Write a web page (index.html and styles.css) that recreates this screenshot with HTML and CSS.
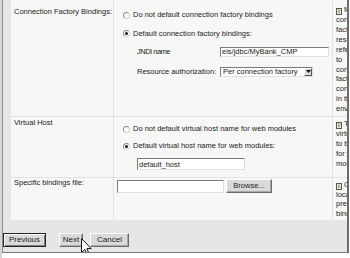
FILE: index.html
```html
<!DOCTYPE html>
<html>
<head>
<meta charset="utf-8">
<link rel="stylesheet" href="styles.css">
</head>
<body>
<div class="page">
  <div class="panel">
    <div class="grid">
      <div class="cell label r1">Connection Factory Bindings:</div>
      <div class="cell ctrl r1">
        <div class="opt"><span class="radio"></span>Do not default connection factory bindings</div>
        <div class="opt"><span class="radio on"></span>Default connection factory bindings:</div>
        <div class="field"><span class="flabel jndi-label">JNDI name</span><input class="text jndi" value="eis/jdbc/MyBank_CMP"></div>
        <div class="field"><span class="flabel">Resource authorization:</span><span class="select"><span class="sel-text">Per connection factory</span><span class="sel-btn"><svg width="5" height="3" viewBox="0 0 5 3"><path d="M0 0H5L2.5 3Z" fill="#111"/></svg></span></span></div>
      </div>
      <div class="cell desc r1"><span class="info">i</span> Map connection factory resource references to connection factory configured in the environment</div>

      <div class="cell label r2">Virtual Host</div>
      <div class="cell ctrl r2">
        <div class="opt"><span class="radio"></span>Do not default virtual host name for web modules</div>
        <div class="opt"><span class="radio on"></span>Default virtual host name for web modules:</div>
        <input class="text vhost" value="default_host">
      </div>
      <div class="cell desc r2"><span class="info">i</span> The virtual host to be used for web modules</div>

      <div class="cell label r3">Specific bindings file:</div>
      <div class="cell ctrl r3">
        <input class="text file" value="">
        <button class="btn browse" type="button">Browse...</button>
      </div>
      <div class="cell desc r3"><span class="info">i</span> Custom location of pre-existing bindings file</div>
    </div>
    <div class="buttons">
      <button class="btn default prev" type="button">Previous</button>
      <button class="btn next" type="button">Next</button>
      <button class="btn cancel" type="button">Cancel</button>
      <svg class="cursor" width="11" height="19" viewBox="0 0 11 19"><path d="M0.5 0.5V14.5L3.8 11.4L6.6 17.8L8.6 16.9L5.9 10.6H10.2Z" fill="#fff" stroke="#111" stroke-width="1" stroke-linejoin="miter"/></svg>
    </div>
  </div>
</div>
</body>
</html>
```

FILE: styles.css
```css
* { box-sizing: border-box; }
html, body { margin: 0; padding: 0; background: #fff; }
body {
  font-family: "Liberation Sans", Arial, sans-serif;
  font-size: 7.5px;
  color: #222;
  -webkit-font-smoothing: antialiased;
}
.page {
  width: 350px;
  height: 258px;
  overflow: hidden;
  border-left: 2px solid #d6d6d6;
}
.panel {
  width: 347px;
  height: 253px;
  background: #e6e6e6;
  border-left: 1px solid #8e8e8e;
  border-right: 2px solid #6c6c6c;
  border-bottom: 1px solid #7a7a7a;
  overflow: hidden;
}
.grid {
  margin-left: 8px;
  display: grid;
  grid-template-columns: 103px 219px 44px;
  grid-template-rows: 117px 61px 42px;
  background: #f7f7f7;
  line-height: 10px;
}
.cell { border-bottom: 1px solid #e2e2e2; }
.cell.r3 { border-bottom: none; }
.label, .ctrl { border-right: 1px solid #e2e2e2; }

.label { padding-left: 3px; }
.label.r1 { padding-top: 7px; }
.label.r2 { padding-top: 1px; }
.label.r3 { padding-top: 0; }

.ctrl { padding-left: 9px; }
.ctrl.r1 { padding-top: 10px; }
.ctrl.r2 { padding-top: 7px; }
.ctrl.r3 { padding: 2px 0 0 3px; display: flex; align-items: flex-start; }

.opt { display: flex; align-items: center; height: 10px; margin-bottom: 8.5px; white-space: nowrap; }
.r2 .opt { margin-bottom: 7px; }
.radio {
  width: 7px; height: 7px;
  border-radius: 50%;
  margin-right: 3px;
  background: #fff;
  border: 1px solid #8a8a8a;
  border-right-color: #d0d0d0;
  border-bottom-color: #d0d0d0;
  display: flex; align-items: center; justify-content: center;
}
.radio.on::after {
  content: "";
  width: 3px; height: 3px;
  border-radius: 50%;
  background: #111;
}
.field { display: flex; align-items: center; height: 10px; padding-left: 14px; margin-bottom: 9.5px; white-space: nowrap; }
.flabel { width: 83px; }
.jndi-label { letter-spacing: -0.5px; }

.text {
  font: inherit;
  color: #222;
  background: #fff;
  border: 1px solid;
  border-color: #7a7a7a #e0e0e0 #e0e0e0 #7a7a7a;
  padding: 0 1px;
  margin: 0;
  outline: none;
}
.jndi { width: 109px; height: 10px; }
.vhost { width: 108px; height: 12px; margin-left: 14px; }
.file { width: 107px; height: 13px; }

.select {
  display: flex; align-items: center;
  width: 93px; height: 10px;
  background: #fff;
  border: 1px solid;
  border-color: #7a7a7a #e0e0e0 #e0e0e0 #7a7a7a;
  padding-left: 2px;
}
.sel-text { flex: 1; white-space: nowrap; overflow: hidden; }
.sel-btn {
  width: 8px; height: 8px;
  background: #d8d8d8;
  border: 1px solid;
  border-color: #fff #555 #555 #fff;
  display: flex; align-items: center; justify-content: center;
}

.desc { padding-left: 3px; line-height: 9.9px; color: #222; }
.desc.r1 { padding-top: 5px; }
.desc.r2 { padding-top: 2px; }
.desc.r3 { padding-top: 1.5px; }
.info {
  display: inline-block;
  width: 6px; height: 7px;
  border: 1px solid #555;
  background: #e4ecdc;
  font-size: 5px; font-weight: bold;
  line-height: 5px;
  text-align: center;
  color: #2d4a1e;
  vertical-align: -1px;
}

.btn {
  font-family: "Liberation Sans", Arial, sans-serif;
  font-size: 8px;
  color: #222;
  height: 14px;
  padding: 0;
  margin: 0;
  background: #d9d9d9;
  border: 1px solid;
  border-color: #fff #6a6a6a #6a6a6a #fff;
  box-shadow: inset -1px -1px #a8a8a8;
  line-height: 10px;
}
.browse { width: 46px; font-size: 7.5px; margin: -1px 0 0 2px; }
.buttons { position: relative; display: flex; padding-top: 13px; }
.btn.default {
  border: 1px solid #222;
  box-shadow: inset 1px 1px #fff, inset -1px -1px #808080;
}
.prev { width: 43px; }
.next { width: 24px; margin-left: 13px; }
.cancel { width: 39px; margin-left: 7px; }
.cursor { position: absolute; left: 78px; top: 18px; }
```
